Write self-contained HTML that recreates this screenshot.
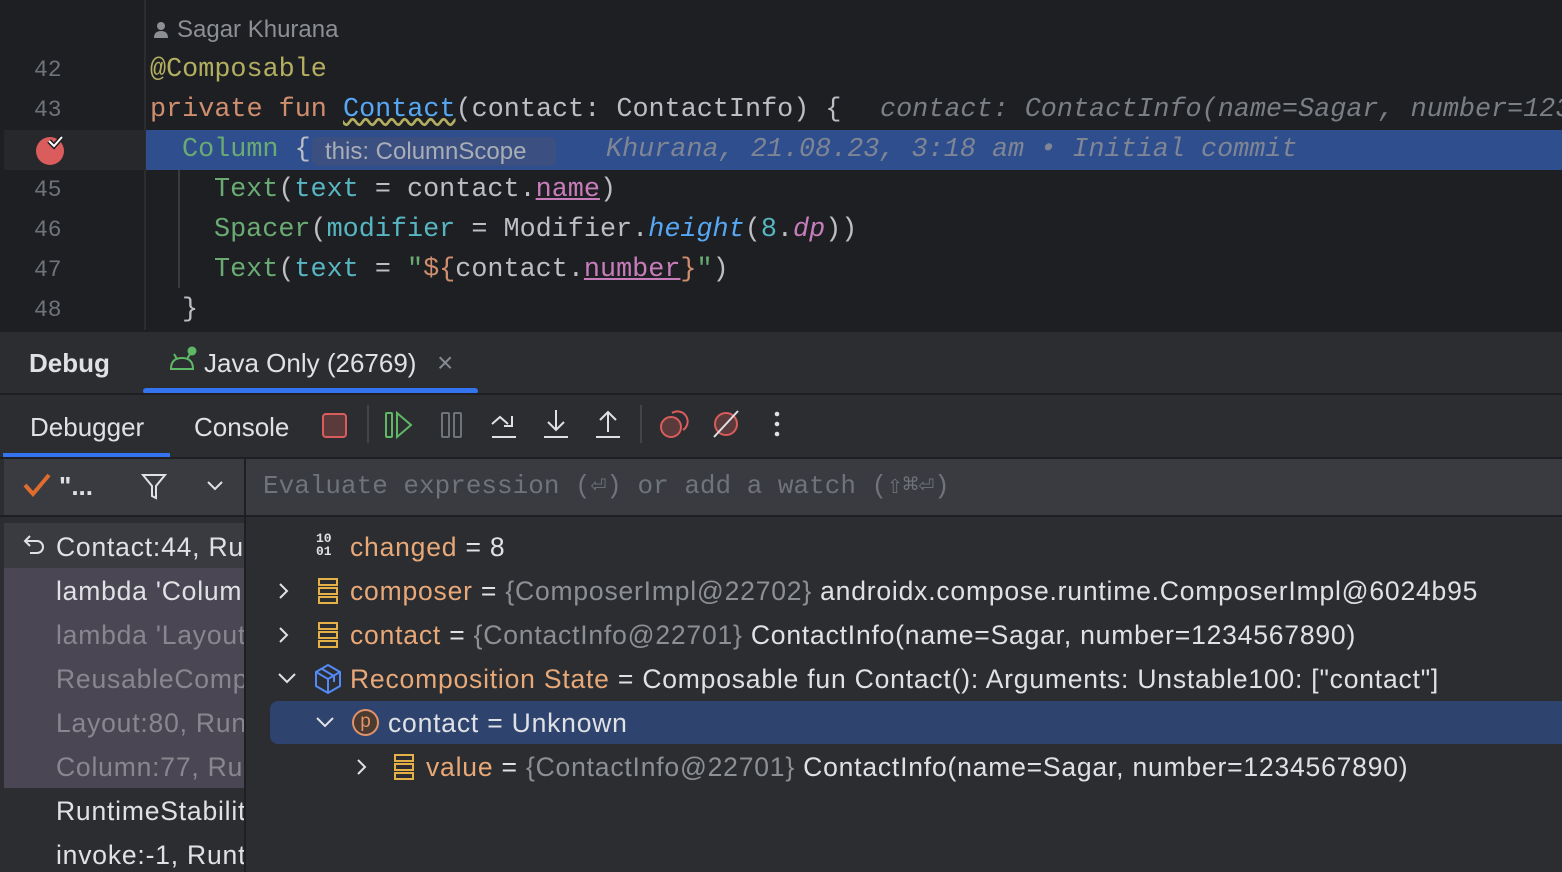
<!DOCTYPE html>
<html><head><meta charset="utf-8"><style>
*{margin:0;padding:0;box-sizing:border-box}
body{width:1562px;height:872px;overflow:hidden;background:#2b2d30;position:relative;font-family:"Liberation Sans",sans-serif}
.a{position:absolute;white-space:nowrap}
.m{font-family:"Liberation Mono",monospace;font-size:26.8px;line-height:40px}
.ln{color:#6f737a;font-family:"Liberation Mono",monospace;font-size:23px;line-height:40px;left:34px}
.u{font-size:26px;line-height:44px;color:#dfe1e5}
.v{font-size:26.5px;letter-spacing:0.8px}
.kw{color:#cf8e6d}.fn{color:#56a8f5}.ann{color:#b3ae60}.gr{color:#6aab73}.pr{color:#56b6c2}.df{color:#bcbec4}.pu{color:#c77dbb}
.hint{color:#7a7e85;font-style:italic}
.o{color:#e8a878}.g{color:#8c8f94}
</style></head><body>
<div class="a" style="left:0;top:0;width:1562px;height:330px;background:#1e1f22;overflow:hidden">
<div class="a" style="left:144px;top:0;width:2px;height:330px;background:#2b2d30"></div>
<div class="a" style="left:4px;top:130px;width:141px;height:40px;background:#26282b"></div>
<div class="a" style="left:146px;top:130px;width:1416px;height:40px;background:#2e4e8d"></div>
<div class="a" style="left:178px;top:170px;width:2px;height:118px;background:#393b40"></div>
<svg class="a" style="left:153px;top:21px" width="16" height="18"><circle cx="8" cy="5" r="4" fill="#8c8f94"/><path d="M1 17 Q1 10 8 10 Q15 10 15 17Z" fill="#8c8f94"/></svg>
<div class="a" style="left:177px;top:10px;color:#8c8f94;font-size:24px;line-height:40px">Sagar Khurana</div>
<div class="a ln" style="top:50px">42</div>
<div class="a ln" style="top:90px">43</div>
<div class="a ln" style="top:170px">45</div>
<div class="a ln" style="top:210px">46</div>
<div class="a ln" style="top:250px">47</div>
<div class="a ln" style="top:290px">48</div>
<svg class="a" style="left:34px;top:134px" width="34" height="32"><circle cx="16" cy="17" r="14" fill="#db5c5c"/><path d="M15 7l5 5 8-9" stroke="#1e1f22" stroke-width="5" fill="none"/><path d="M15 7l5 5 8-9" stroke="#fff" stroke-width="2" fill="none"/></svg>
<div class="a m ann" style="left:150px;top:50px">@Composable</div>
<div class="a m df" style="left:150px;top:90px"><span class="kw">private fun </span><span class="fn" style="text-decoration:underline wavy #b3ae60">Contact</span>(contact: ContactInfo) {</div>
<div class="a m hint" style="left:880px;top:90px">contact: ContactInfo(name=Sagar, number=1234567890)</div>
<div class="a m df" style="left:182px;top:130px"><span class="gr">Column</span> {</div>
<div class="a" style="left:312px;top:137px;width:244px;height:29px;background:#3b5080;border-radius:6px;color:#a9adb5;font-size:24px;line-height:29px;padding-left:13px">this: ColumnScope</div>
<div class="a m hint" style="left:606px;top:130px;color:#7f8594">Khurana, 21.08.23, 3:18 am • Initial commit</div>
<div class="a m df" style="left:214px;top:170px"><span class="gr">Text</span>(<span class="pr">text</span> = contact.<span class="pu" style="text-decoration:underline">name</span>)</div>
<div class="a m df" style="left:214px;top:210px"><span class="gr">Spacer</span>(<span class="pr">modifier</span> = Modifier.<i class="fn">height</i>(<span class="pr">8</span>.<i class="pu">dp</i>))</div>
<div class="a m df" style="left:214px;top:250px"><span class="gr">Text</span>(<span class="pr">text</span> = <span class="gr">"</span><span class="kw">${</span>contact.<span class="pu" style="text-decoration:underline">number</span><span class="kw">}</span><span class="gr">"</span>)</div>
<div class="a m df" style="left:182px;top:290px">}</div>
</div>
<div class="a" style="left:0;top:330px;width:1562px;height:2px;background:#1e1f22"></div>
<div class="a u" style="left:29px;top:341px;font-weight:bold">Debug</div>
<svg class="a" style="left:168px;top:346px" width="30" height="26"><circle cx="24" cy="5" r="4.5" fill="#5fb865"/><path d="M3 23 Q3 12 14 12 Q25 12 25 23Z M2 23h24" stroke="#5fb865" stroke-width="2" fill="none"/><path d="M6 8l3 5M22 8l-3 5" stroke="#5fb865" stroke-width="2"/></svg>
<div class="a u" style="left:204px;top:341px">Java Only (26769)</div>
<div class="a" style="left:437px;top:347px;color:#868a91;font-size:28px;line-height:32px">×</div>
<div class="a" style="left:143px;top:388px;width:335px;height:6px;background:#3574f0;border-radius:3px"></div>
<div class="a" style="left:0;top:393px;width:1562px;height:2px;background:#1e1f22"></div>
<div class="a u" style="left:30px;top:405px">Debugger</div>
<div class="a u" style="left:194px;top:405px">Console</div>
<div class="a" style="left:3px;top:453px;width:167px;height:5px;background:#3574f0"></div>
<div class="a" style="left:322px;top:413px;width:25px;height:25px;border:2px solid #db5c5c;background:#5a3a3a;border-radius:4px"></div>
<div class="a" style="left:367px;top:405px;width:2px;height:38px;background:#43454a"></div>
<svg class="a" style="left:383px;top:410px" width="34" height="30" fill="none" stroke-width="2"><rect x="3" y="3" width="6" height="24" rx="1" stroke="#5fb865"/><path d="M14 3 L28 15 L14 27Z" stroke="#5fb865"/></svg>
<svg class="a" style="left:440px;top:410px" width="26" height="30" fill="none" stroke="#6f737a" stroke-width="2"><rect x="2" y="3" width="7" height="24" rx="1"/><rect x="14" y="3" width="7" height="24" rx="1"/></svg>
<svg class="a" style="left:490px;top:410px" width="30" height="30" fill="none" stroke="#dfe1e5" stroke-width="2"><path d="M2 14 L10 7 L18 14 M22 6v10h-8 M2 27h24"/></svg>
<svg class="a" style="left:542px;top:408px" width="30" height="32" fill="none" stroke="#dfe1e5" stroke-width="2"><path d="M14 2v20 M6 14l8 8 8-8 M2 29h24"/></svg>
<svg class="a" style="left:594px;top:408px" width="30" height="32" fill="none" stroke="#dfe1e5" stroke-width="2"><path d="M14 24V4 M6 12l8-8 8 8 M2 29h24"/></svg>
<div class="a" style="left:640px;top:405px;width:2px;height:38px;background:#43454a"></div>
<svg class="a" style="left:658px;top:408px" width="34" height="32" fill="none" stroke="#db5c5c" stroke-width="2"><circle cx="13" cy="19" r="10" fill="#5a3a3a"/><path d="M14 5 A10 10 0 1 1 25 22"/></svg>
<svg class="a" style="left:710px;top:408px" width="34" height="32" fill="none" stroke-width="2"><circle cx="16" cy="16" r="11" stroke="#db5c5c" fill="#5a3a3a"/><path d="M4 29 L28 3" stroke="#dfe1e5"/></svg>
<svg class="a" style="left:772px;top:410px" width="10" height="30" fill="#dfe1e5"><circle cx="5" cy="4" r="2.3"/><circle cx="5" cy="14" r="2.3"/><circle cx="5" cy="24" r="2.3"/></svg>
<div class="a" style="left:0;top:457px;width:1562px;height:2px;background:#1e1f22"></div>
<div class="a" style="left:4px;top:459px;width:240px;height:56px;background:#393b40"></div>
<div class="a" style="left:246px;top:459px;width:1316px;height:56px;background:#393b40"></div>
<div class="a" style="left:244px;top:459px;width:2px;height:413px;background:#1e1f22"></div>
<div class="a" style="left:0;top:515px;width:1562px;height:2px;background:#1e1f22"></div>
<svg class="a" style="left:22px;top:472px" width="30" height="26" fill="none" stroke="#e06c30" stroke-width="4"><path d="M3 13l8 9L27 3"/></svg>
<div class="a u" style="left:59px;top:464px;font-weight:bold">"...</div>
<svg class="a" style="left:141px;top:472px" width="26" height="28" fill="none" stroke="#dfe1e5" stroke-width="2"><path d="M2 3h22L15 14v12l-4-2V14Z"/></svg>
<svg class="a" style="left:206px;top:480px" width="18" height="12" fill="none" stroke="#dfe1e5" stroke-width="2"><path d="M2 2l7 7 7-7"/></svg>
<div class="a m" style="left:263px;top:466px;color:#6f737a;font-size:26px">Evaluate expression (⏎) or add a watch (⇧⌘⏎)</div>
<div class="a" style="left:4px;top:523px;width:240px;height:45px;background:#393b40"></div>
<div class="a" style="left:4px;top:568px;width:240px;height:220px;background:#4b4654"></div>
<div class="a" style="left:4px;top:517px;width:240px;height:355px;overflow:hidden">
<svg class="a" style="left:18px;top:17px" width="26" height="22" fill="none" stroke="#dfe1e5" stroke-width="2"><path d="M8 2L3 7l5 5 M3 7h12a6 6 0 0 1 0 12H8"/></svg>
<div class="a u v" style="left:52px;top:8px">Contact:44, Runtime</div>
<div class="a u v" style="left:52px;top:52px">lambda 'Column'</div>
<div class="a u v" style="left:52px;top:96px;color:#8a8690">lambda 'Layout'</div>
<div class="a u v" style="left:52px;top:140px;color:#8a8690">ReusableComposeNode</div>
<div class="a u v" style="left:52px;top:184px;color:#8a8690">Layout:80, Runtime</div>
<div class="a u v" style="left:52px;top:228px;color:#8a8690">Column:77, Runtime</div>
<div class="a u v" style="left:52px;top:272px">RuntimeStability</div>
<div class="a u v" style="left:52px;top:316px">invoke:-1, Runtime</div>
</div>
<div class="a" style="left:270px;top:701px;width:1292px;height:43px;background:#2e436e;border-radius:8px 0 0 8px"></div>
<div class="a" style="left:316px;top:532px;color:#dfe1e5;font-family:'Liberation Mono',monospace;font-size:13px;line-height:13px;font-weight:bold">10<br>01</div>
<div class="a u v" style="left:350px;top:525px"><span class="o">changed</span> = 8</div>
<svg class="a" style="left:276px;top:581px" width="16" height="20" fill="none" stroke="#dfe1e5" stroke-width="2"><path d="M4 3l7 7-7 7"/></svg>
<svg class="a" style="left:317px;top:577px" width="22" height="28" fill="none" stroke="#e5b045" stroke-width="2"><rect x="2" y="2" width="18" height="6"/><rect x="2" y="11" width="18" height="6"/><rect x="2" y="20" width="18" height="6"/></svg>
<div class="a u v" style="left:350px;top:569px"><span class="o">composer</span> = <span class="g">{ComposerImpl@22702}</span> androidx.compose.runtime.ComposerImpl@6024b95</div>
<svg class="a" style="left:276px;top:625px" width="16" height="20" fill="none" stroke="#dfe1e5" stroke-width="2"><path d="M4 3l7 7-7 7"/></svg>
<svg class="a" style="left:317px;top:621px" width="22" height="28" fill="none" stroke="#e5b045" stroke-width="2"><rect x="2" y="2" width="18" height="6"/><rect x="2" y="11" width="18" height="6"/><rect x="2" y="20" width="18" height="6"/></svg>
<div class="a u v" style="left:350px;top:613px"><span class="o">contact</span> = <span class="g">{ContactInfo@22701}</span> ContactInfo(name=Sagar, number=1234567890)</div>
<svg class="a" style="left:276px;top:670px" width="22" height="16" fill="none" stroke="#dfe1e5" stroke-width="2"><path d="M3 4l8 8 8-8"/></svg>
<svg class="a" style="left:313px;top:663px" width="30" height="32" fill="none" stroke="#548af7" stroke-width="2"><path d="M15 2L27 9v14L15 30 3 23V9Z M3 9l12 7 12-7 M15 16v14 M9 6l12 7v6"/></svg>
<div class="a u v" style="left:350px;top:657px"><span class="o">Recomposition State</span> = Composable fun Contact(): Arguments: Unstable100: ["contact"]</div>
<svg class="a" style="left:314px;top:714px" width="22" height="16" fill="none" stroke="#dfe1e5" stroke-width="2"><path d="M3 4l8 8 8-8"/></svg>
<div class="a" style="left:352px;top:709px;width:27px;height:27px;border-radius:50%;border:2px solid #e0926a;background:#4a3a30;color:#e0926a;font-size:19px;line-height:22px;text-align:center">p</div>
<div class="a u v" style="left:388px;top:701px">contact = Unknown</div>
<svg class="a" style="left:354px;top:757px" width="16" height="20" fill="none" stroke="#dfe1e5" stroke-width="2"><path d="M4 3l7 7-7 7"/></svg>
<svg class="a" style="left:393px;top:753px" width="22" height="28" fill="none" stroke="#e5b045" stroke-width="2"><rect x="2" y="2" width="18" height="6"/><rect x="2" y="11" width="18" height="6"/><rect x="2" y="20" width="18" height="6"/></svg>
<div class="a u v" style="left:426px;top:745px"><span class="o">value</span> = <span class="g">{ContactInfo@22701}</span> ContactInfo(name=Sagar, number=1234567890)</div>
</body></html>
